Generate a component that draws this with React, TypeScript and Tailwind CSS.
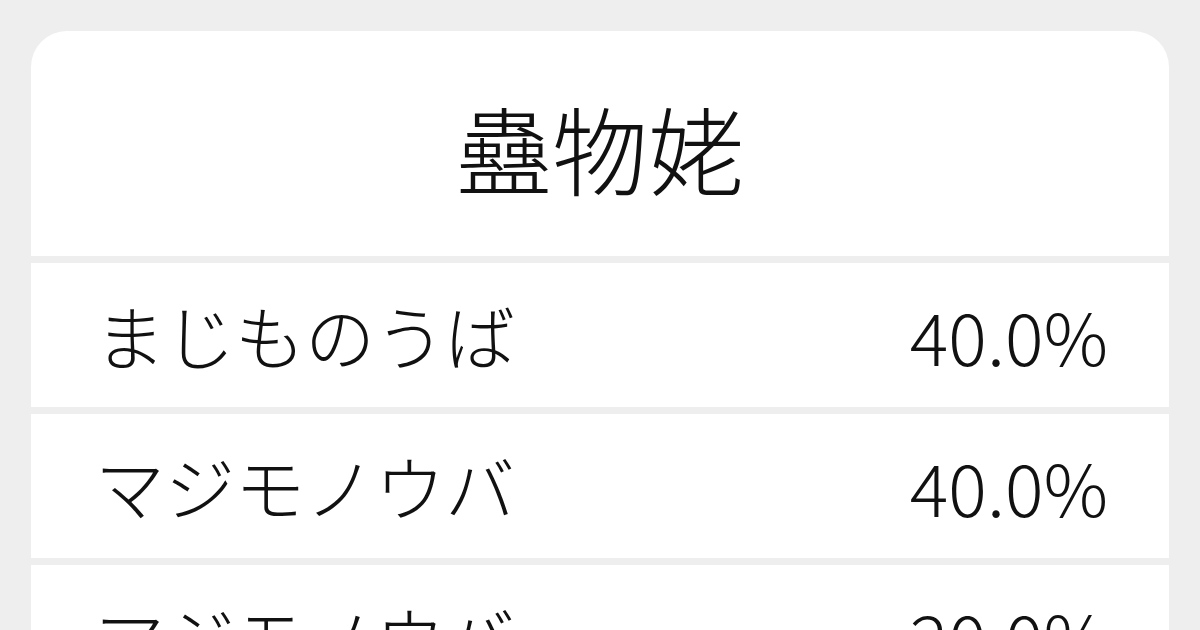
const rows = [
  { reading: "まじものうば", ratio: "40.0%" },
  { reading: "マジモノウバ", ratio: "40.0%" },
  { reading: "マジモノウバ", ratio: "20.0%" },
];

export default function App() {
  return (
    <div
      className="w-[1200px] h-[630px] overflow-hidden bg-[#eeeeee] px-[31px] pt-[31px] text-[#111111]"
      style={{ fontFamily: '"Noto Sans CJK JP", "Noto Sans", sans-serif' }}
    >
      <div className="flex flex-col gap-[7px] rounded-t-[36px] overflow-hidden">
        <div className="h-[225px] bg-white flex items-center justify-center pt-[6px]">
          <h1 className="text-[96px] font-light leading-none">蠱物姥</h1>
        </div>
        {rows.map((row, i) => (
          <div key={i} className="h-[144px] shrink-0 bg-white flex items-center justify-between pl-[64px] pr-[61px]">
            <span className="text-[70px] font-light leading-none">{row.reading}</span>
            <span className="text-[72px] font-light leading-none">{row.ratio}</span>
          </div>
        ))}
      </div>
    </div>
  );
}
